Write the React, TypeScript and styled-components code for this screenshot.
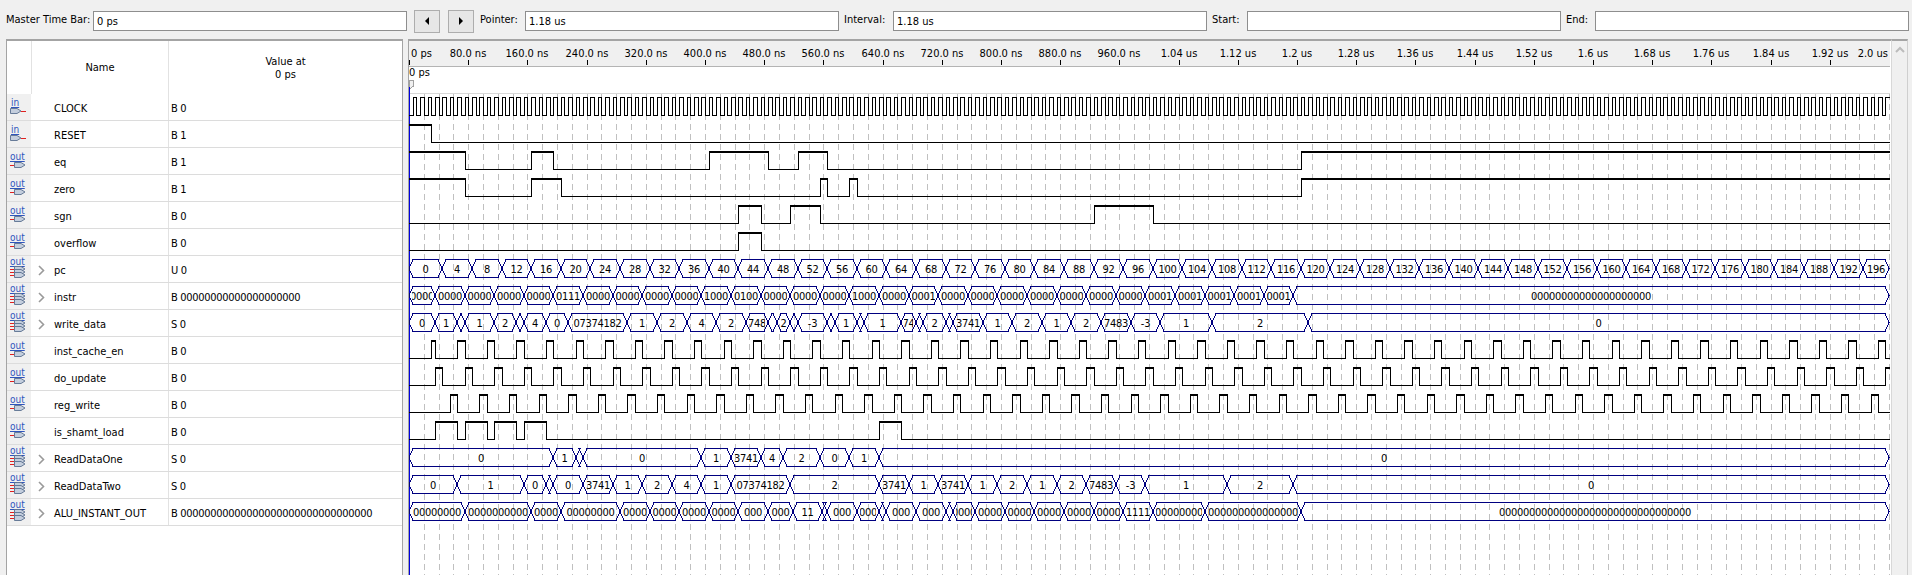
import React from "react";
import styled, { createGlobalStyle } from "styled-components";

const FONT = `"DejaVu Sans Condensed", "Liberation Sans", sans-serif`;
const PX_PER_NS = 0.74;
const WAVE_W = 1481;
const ROW_H = 27;
const END = 2000;

const X = (t: number) => Math.round(t * PX_PER_NS);

const GlobalStyle = createGlobalStyle`
  html, body { margin: 0; padding: 0; background: #f0f0f0; overflow: hidden; }
  body { font: 11px ${FONT}; color: #000; }
`;

const Page = styled.div`
  width: 1912px;
  height: 575px;
  display: flex;
  flex-direction: column;
  overflow: hidden;
`;
const Toolbar = styled.div`
  height: 39px;
  flex: none;
  display: flex;
  align-items: center;
  padding: 3px 0 0 6px;
  box-sizing: border-box;
`;
const Label = styled.span<{ $w: number; $pl?: number }>`
  width: ${(p) => p.$w}px;
  padding-left: ${(p) => p.$pl ?? 0}px;
  box-sizing: border-box;
  flex: none;
  white-space: nowrap;
  position: relative;
  top: -2px;
`;
const TimeField = styled.div`
  width: 314px;
  height: 20px;
  flex: none;
  box-sizing: border-box;
  background: #fff;
  border: 1px solid #8e8e8e;
  padding-left: 3px;
  line-height: 19px;
`;
const StepButton = styled.div<{ $ml: number }>`
  width: 26px;
  height: 23px;
  flex: none;
  margin-left: ${(p) => p.$ml}px;
  box-sizing: border-box;
  background: #e6e6e6;
  border: 1px solid #adadad;
  display: flex;
  align-items: center;
  justify-content: center;
`;
const Arrow = styled.div<{ $left?: boolean }>`
  width: 0;
  height: 0;
  border-top: 4px solid transparent;
  border-bottom: 4px solid transparent;
  ${(p) => (p.$left ? "border-right: 4px solid #000;" : "border-left: 4px solid #000;")}
`;
const Main = styled.div`
  flex: 1;
  display: flex;
  min-height: 0;
  padding-left: 6px;
`;
const NamePanel = styled.div`
  width: 397px;
  flex: none;
  box-sizing: border-box;
  background: #fff;
  border-top: 2px solid #a4a4a4;
  border-left: 1px solid #a4a4a4;
  border-right: 1px solid #a4a4a4;
`;
const HeaderRow = styled.div`
  height: 53px;
  display: grid;
  grid-template-columns: 24px 137px 1fr;
`;
const HeaderCell = styled.div<{ $line?: boolean }>`
  display: flex;
  align-items: center;
  justify-content: center;
  text-align: center;
  line-height: 13px;
  border-left: ${(p) => (p.$line ? "1px solid #e2e2e2" : "none")};
`;
const Row = styled.div`
  height: ${ROW_H}px;
  box-sizing: border-box;
  display: grid;
  grid-template-columns: 24px 137px 1fr;
  border-bottom: 1px solid #dcdcdc;
`;
const Gutter = styled.div`
  background: #f0f0f0;
  display: flex;
  align-items: center;
  justify-content: center;
`;
const NameCell = styled.div`
  display: flex;
  align-items: center;
  padding: 2px 0 0 7px;
`;
const Expander = styled.div`
  width: 16px;
  flex: none;
  display: flex;
  align-items: center;
`;
const ValueCell = styled.div`
  display: flex;
  align-items: center;
  padding: 2px 0 0 2px;
  border-left: 1px solid #e2e2e2;
  white-space: nowrap;
  letter-spacing: -0.3px;
`;
const Splitter = styled.div`
  width: 5px;
  flex: none;
`;
const WavePane = styled.div`
  width: ${WAVE_W + 1}px;
  flex: none;
  background: #fff;
  border-top: 2px solid #a4a4a4;
  border-left: 1px solid #a4a4a4;
  display: flex;
  flex-direction: column;
`;
const Ruler = styled.svg`
  display: block;
  flex: none;
  background: #f0f0f0;
  border-bottom: 1px solid #b4b4b4;
`;
const WaveSvg = styled.svg`
  display: block;
  flex: none;
`;
const ScrollBar = styled.div`
  width: 17px;
  flex: none;
  box-sizing: border-box;
  border-top: 2px solid #a4a4a4;
  border-right: 1px solid #cfcfcf;
  border-left: 1px solid #d8d8d8;
  display: flex;
  justify-content: center;
  padding-top: 5px;
`;

const PinIcon = ({ dir, bus }: { dir: "in" | "out"; bus: boolean }) => {
  const isIn = dir === "in";
  const pins = bus ? [10, 13, 16] : [14];
  const x = isIn ? 1 : 5;
  return (
    <svg width="20" height="26" viewBox="0 0 20 26">
      <text
        x={isIn ? 2 : 1}
        y={bus ? 9 : 12}
        fontSize="10"
        fill="#2f55bd"
        textDecoration="underline"
        fontFamily={FONT}
      >
        {dir}
      </text>
      {pins.map((y) => (
        <line
          key={`w${y}`}
          x1={isIn ? 12 : 1}
          x2={isIn ? 17 : 5}
          y1={y + 3.5}
          y2={y + 3.5}
          stroke="#e02020"
          shapeRendering="crispEdges"
        />
      ))}
      {pins.map((y) => (
        <polygon
          key={y}
          points={`${x + 0.5},${y + 0.5} ${x + 7},${y + 0.5} ${x + 11},${y + 3} ${x + 7},${y + 5.5} ${x + 0.5},${y + 5.5}`}
          fill="#c4cedd"
          stroke="#5a6f8e"
          strokeWidth="0.9"
        />
      ))}
    </svg>
  );
};

const Chevron = () => (
  <svg width="7" height="11" viewBox="0 0 7 11">
    <path d="M1 1 L5.5 5.5 L1 10" fill="none" stroke="#9a9a9a" strokeWidth="1.6" />
  </svg>
);

type Sig = {
  name: string;
  value: string;
  dir: "in" | "out";
  bus?: boolean;
  edges?: number[];
  segs?: [number, string][];
};

// pulses: rising edge every period, starting at first
const pulses = (first: number, width: number, period: number, extra: number[] = []) => {
  const out = [...extra];
  for (let t = first; t < END; t += period) {
    out.push(t);
    if (t + width < END) out.push(t + width);
  }
  return out;
};

const pcSegs: [number, string][] = Array.from({ length: 50 }, (_, i) => [
  i === 49 ? END : 45 + 40 * i,
  String(i * 4),
]);

const instrCodes = [
  "0000", "0000", "0000", "0000", "0000", "0111", "0000", "0000",
  "0000", "0000", "1000", "0100", "0000", "0000", "0000", "1000",
  "0000", "0001", "0000", "0000", "0000", "0000", "0000", "0000",
  "0000", "0001", "0001", "0001", "0001",
];
const instrSegs: [number, string][] = [
  ...instrCodes.map((c, i): [number, string] => [35 + 40 * i, c]),
  [1195, "0001"],
  [END, "00000000000000000000"],
];

const ZEROS = "00000000000000000000000000000000";

const SIGNALS: Sig[] = [
  { name: "CLOCK", value: "B 0", dir: "in", edges: pulses(5, 5, 10) },
  { name: "RESET", value: "B 1", dir: "in", edges: [0, 30] },
  { name: "eq", value: "B 1", dir: "out", edges: [0, 75, 165, 195, 405, 485, 525, 565, 1205] },
  { name: "zero", value: "B 1", dir: "out", edges: [0, 75, 165, 205, 555, 565, 595, 605, 1205] },
  { name: "sgn", value: "B 0", dir: "out", edges: [445, 475, 515, 555, 925, 1005] },
  { name: "overflow", value: "B 0", dir: "out", edges: [445, 475] },
  { name: "pc", value: "U 0", dir: "out", bus: true, segs: pcSegs },
  { name: "instr", value: "B 00000000000000000000", dir: "out", bus: true, segs: instrSegs },
  {
    name: "write_data",
    value: "S 0",
    dir: "out",
    bus: true,
    segs: [
      [35, "0"], [65, "1"], [75, ""], [115, "1"], [145, "2"], [155, ""], [185, "4"], [215, "0"],
      [295, "07374182"], [335, "1"], [375, "2"], [415, "4"], [455, "2"], [485, "748"], [497, ""],
      [515, "2"], [525, ""], [565, "-3"], [575, ""], [605, "1"], [615, ""], [665, "1"], [685, "74"],
      [695, ""], [725, "2"], [735, ""], [775, "3741"], [815, "1"], [855, "2"], [895, "1"], [935, "2"],
      [975, "7483"], [1015, "-3"], [1085, "1"], [1215, "2"], [END, "0"],
    ],
  },
  { name: "inst_cache_en", value: "B 0", dir: "out", edges: pulses(65, 10, 40, [30, 35]) },
  { name: "do_update", value: "B 0", dir: "out", edges: pulses(35, 10, 40) },
  { name: "reg_write", value: "B 0", dir: "out", edges: pulses(55, 10, 40) },
  {
    name: "is_shamt_load",
    value: "B 0",
    dir: "out",
    edges: [35, 65, 75, 105, 115, 145, 155, 185, 635, 665],
  },
  {
    name: "ReadDataOne",
    value: "S 0",
    dir: "out",
    bus: true,
    segs: [
      [195, "0"], [225, "1"], [235, ""], [395, "0"], [435, "1"], [475, "3741"], [505, "4"],
      [555, "2"], [595, "0"], [635, "1"], [END, "0"],
    ],
  },
  {
    name: "ReadDataTwo",
    value: "S 0",
    dir: "out",
    bus: true,
    segs: [
      [65, "0"], [155, "1"], [185, "0"], [195, ""], [235, "0"], [275, "3741"], [315, "1"],
      [355, "2"], [395, "4"], [435, "1"], [515, "07374182"], [635, "2"], [675, "3741"], [715, "1"],
      [755, "3741"], [795, "1"], [835, "2"], [875, "1"], [915, "2"], [955, "7483"], [995, "-3"],
      [1105, "1"], [1195, "2"], [END, "0"],
    ],
  },
  {
    name: "ALU_INSTANT_OUT",
    value: "B " + ZEROS,
    dir: "out",
    bus: true,
    segs: [
      [75, "00000000"], [165, "0000000000"], [205, "0000"], [285, "00000000"],
      [325, "0000"], [365, "0000"], [405, "0000"], [445, "0000"], [485, "000"],
      [519, "000"], [558, "11"], [565, ""], [605, "000"], [635, "000"], [645, ""], [685, "000"],
      [725, "000"], [735, ""], [765, "0000"], [805, "0000"], [845, "0000"], [885, "0000"],
      [925, "0000"], [965, "0000"], [1005, "1111"], [1075, "00000000"], [1205, "000000000000000"],
      [END, ZEROS],
    ],
  },
];

const digitalPath = (edges: number[], hi: number, lo: number) => {
  // starts high when the first edge is at t = 0
  let level = edges[0] === 0 ? 1 : 0;
  const list = edges[0] === 0 ? edges.slice(1) : edges;
  let d = `M0 ${level ? hi : lo}`;
  const highs: string[] = [];
  let from = 0;
  list.forEach((t) => {
    const x = X(t);
    if (level) highs.push(`M${from} ${hi + 0.5}H${x}`);
    d += `H${x}V${level ? lo : hi}`;
    level = 1 - level;
    from = x;
  });
  d += `H${WAVE_W}`;
  if (level) highs.push(`M${from} ${hi + 0.5}H${WAVE_W}`);
  return { d, highs: highs.join("") };
};

const Digital = ({ sig, top }: { sig: Sig; top: number }) => {
  const hi = top + 3.5;
  const lo = top + 21.5;
  const { d, highs } = digitalPath(sig.edges ?? [], hi, lo);
  return (
    <g shapeRendering="crispEdges" fill="none" stroke="#000">
      <path d={d} strokeWidth="1" />
      {sig.name !== "CLOCK" && <path d={highs} strokeWidth="2" />}
    </g>
  );
};

const Bus = ({ sig, top }: { sig: Sig; top: number }) => {
  const hi = top + 3.5;
  const lo = top + 21.5;
  const mid = top + 12.5;
  const slope = 4;
  let start = 0;
  return (
    <g>
      {(sig.segs ?? []).map(([end, label], i) => {
        const x0 = X(start);
        const x1 = end === END ? WAVE_W - 1 : X(end);
        start = end;
        const pts = `${x0},${mid} ${x0 + slope},${hi} ${x1 - slope},${hi} ${x1},${mid} ${x1 - slope},${lo} ${x0 + slope},${lo}`;
        return (
          <g key={i}>
            <polygon points={pts} fill="none" stroke="#000080" strokeWidth="1" shapeRendering="crispEdges" />
            {label && (
              <svg x={x0 + 3} y={top} width={Math.max(x1 - x0 - 6, 1)} height={ROW_H} overflow="hidden">
                <text
                  x="50%"
                  y="17"
                  textAnchor="middle"
                  fontSize="11"
                  letterSpacing="-0.3"
                  fontFamily={FONT}
                  fill="#000"
                >
                  {label}
                </text>
              </svg>
            )}
          </g>
        );
      })}
    </g>
  );
};

const TICKS = [
  "80.0 ns", "160.0 ns", "240.0 ns", "320.0 ns", "400.0 ns", "480.0 ns", "560.0 ns", "640.0 ns",
  "720.0 ns", "800.0 ns", "880.0 ns", "960.0 ns", "1.04 us", "1.12 us", "1.2 us", "1.28 us", "1.36 us",
  "1.44 us", "1.52 us", "1.6 us", "1.68 us", "1.76 us", "1.84 us", "1.92 us",
];

const HEIGHT = 481;

export default function App() {
  return (
    <Page>
      <GlobalStyle />
      <Toolbar>
        <Label $w={87}>Master Time Bar:</Label>
        <TimeField>0 ps</TimeField>
        <StepButton $ml={7}>
          <Arrow $left />
        </StepButton>
        <StepButton $ml={8}>
          <Arrow />
        </StepButton>
        <Label $w={51} $pl={6}>
          Pointer:
        </Label>
        <TimeField>1.18 us</TimeField>
        <Label $w={54} $pl={5}>
          Interval:
        </Label>
        <TimeField>1.18 us</TimeField>
        <Label $w={40} $pl={5}>
          Start:
        </Label>
        <TimeField />
        <Label $w={34} $pl={5}>
          End:
        </Label>
        <TimeField />
      </Toolbar>
      <Main>
        <NamePanel>
          <HeaderRow>
            <div />
            <HeaderCell $line>Name</HeaderCell>
            <HeaderCell $line>
              Value at
              <br />0 ps
            </HeaderCell>
          </HeaderRow>
          {SIGNALS.map((s) => (
            <Row key={s.name}>
              <Gutter>
                <PinIcon dir={s.dir} bus={!!s.bus} />
              </Gutter>
              <NameCell>
                <Expander>{s.bus && <Chevron />}</Expander>
                {s.name}
              </NameCell>
              <ValueCell>{s.value}</ValueCell>
            </Row>
          ))}
        </NamePanel>
        <Splitter />
        <WavePane>
          <Ruler width={WAVE_W} height={25}>
            <text x="2" y="16" fontSize="11" fontFamily={FONT}>
              0 ps
            </text>
            <line x1="0.5" x2="0.5" y1="19" y2="24" stroke="#000" shapeRendering="crispEdges" />
            {TICKS.map((t, i) => (
              <g key={t}>
                <text x={X((i + 1) * 80)} y="16" fontSize="11" fontFamily={FONT} textAnchor="middle">
                  {t}
                </text>
                <line
                  x1={X((i + 1) * 80) + 0.5}
                  x2={X((i + 1) * 80) + 0.5}
                  y1="19"
                  y2="24"
                  stroke="#000"
                  shapeRendering="crispEdges"
                />
              </g>
            ))}
            <text x={WAVE_W - 2} y="16" fontSize="11" fontFamily={FONT} textAnchor="end">
              2.0 us
            </text>
          </Ruler>
          <WaveSvg width={WAVE_W} height={HEIGHT + 27} viewBox={`0 -27 ${WAVE_W} ${HEIGHT + 27}`}>
            <text x="0" y="-18" fontSize="11" fontFamily={FONT}>
              0 ps
            </text>
            <line x1="0" x2={WAVE_W} y1="-0.5" y2="-0.5" stroke="#d8d8d8" shapeRendering="crispEdges" />
            {Array.from({ length: 100 }, (_, i) => (
              <line
                key={i}
                x1={X((i + 1) * 20) + 0.5}
                x2={X((i + 1) * 20) + 0.5}
                y1="0"
                y2={HEIGHT}
                stroke="#c0c0c0"
                strokeDasharray="6 4"
                shapeRendering="crispEdges"
              />
            ))}
            <path d="M0.5 -13.5 H4.5 V-8 L2 -6 H0.5 Z" fill="#f0f0f0" stroke="#a0a0a0" shapeRendering="crispEdges" />
            <line x1="0.5" x2="0.5" y1="-7" y2={HEIGHT} stroke="#0000e0" shapeRendering="crispEdges" />
            {SIGNALS.map((s, i) => {
              const top = i * ROW_H;
              return s.bus ? <Bus key={s.name} sig={s} top={top} /> : <Digital key={s.name} sig={s} top={top} />;
            })}
          </WaveSvg>
        </WavePane>
        <ScrollBar>
          <svg width="10" height="7" viewBox="0 0 10 7">
            <path d="M1 6 L5 2 L9 6" fill="none" stroke="#bcbcbc" strokeWidth="2" />
          </svg>
        </ScrollBar>
      </Main>
    </Page>
  );
}
